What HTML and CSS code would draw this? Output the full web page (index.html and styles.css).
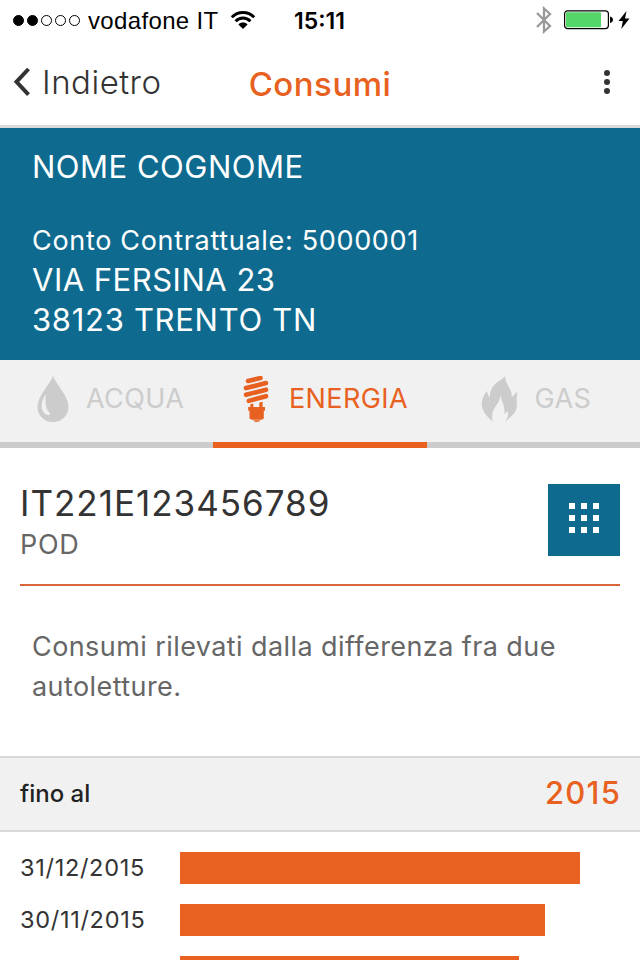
FILE: index.html
```html
<!DOCTYPE html>
<html lang="it">
<head>
    <meta charset="UTF-8">
    <meta name="viewport" content="width=device-width, initial-scale=1.0">
    <title>Consumi</title>
    <link rel="stylesheet" href="styles.css">
</head>
<body>
    <div class="status-bar">
        <div class="signal">
            <span class="dot full"></span>
            <span class="dot full"></span>
            <span class="dot"></span>
            <span class="dot"></span>
            <span class="dot"></span>
        </div>
        <span class="carrier">vodafone IT</span>
        <svg class="wifi" width="26" height="20" viewBox="0 0 26 20">
            <path d="M1.8 7.2C8 .9 18 .9 24.2 7.2M5.6 11.2c4.2-4.2 10.6-4.2 14.8 0" fill="none" stroke="#000" stroke-width="3"/>
            <path d="M13 19l-4.600-4.600c2.600-2.400 6.600-2.400 9.200 0z"/>
        </svg>
        <span class="time">15:11</span>
        <div class="status-right">
            <svg width="16" height="28" viewBox="0 0 16 28">
                <path d="M1 7l13 13-6 5.5V2.5l6 5.500L1 21" fill="none" stroke="#999" stroke-width="2.300"/>
            </svg>
            <svg class="battery" width="50" height="20" viewBox="0 0 50 20">
                <rect x=".6" y=".8" width="43.800" height="17.800" rx="3" fill="#fff" stroke="#000" stroke-width="1.200"/>
                <rect x="2" y="2.200" width="35" height="15" rx="1" fill="#53d769"/>
                <path d="M46 6.500c4 .5 4 6 0 6.500z"/>
            </svg>
            <svg width="12" height="20" viewBox="0 0 12 20">
                <path d="M8.500 1L.5 11h4.300L3.300 19 11.500 8.500H7z"/>
            </svg>
        </div>
    </div>

    <div class="navbar">
        <a class="back">
            <svg width="18" height="30" viewBox="0 0 18 30">
                <path d="M15.500 2L3.500 14.800l12 12.800" fill="none" stroke="#333" stroke-width="4"/>
            </svg>
            <span>Indietro</span>
        </a>
        <h1>Consumi</h1>
        <div class="menu">
            <span></span>
            <span></span>
            <span></span>
        </div>
    </div>

    <div class="account">
        <p class="name">NOME COGNOME</p>
        <p class="contract">Conto Contrattuale: 5000001</p>
        <p class="street">VIA FERSINA 23</p>
        <p class="city">38123 TRENTO TN</p>
    </div>

    <div class="tabs">
        <div class="tab">
            <svg width="36" height="46" viewBox="0 0 36 46">
                <path fill="#ccc" d="M18 0c3 8.500 15.500 19.500 15.500 31a15.500 15.200 0 0 1-31 0C2.500 19.500 15 8.500 18 0z"/>
                <path fill="#f1f1f1" d="M10.900 18.300C5.500 26 4.500 36 13 39.200c1.400.3 2.300-.8 1.600-2.400C11 33.500 9.800 27 10.900 18.300z"/>
            </svg>
            <span>ACQUA</span>
        </div>
        <div class="tab active">
            <svg width="36" height="46" viewBox="0 0 36 46">
                <path d="M10 4.900l12.500-2.900M8 12.100l20-5.100M8 18.800l20-5.100M10.800 24.900l17.200-4.700" fill="none" stroke="#e86120" stroke-width="4.600" stroke-linecap="round"/>
                <path fill="#e86120" d="M12.300 28.300l3-.8V31h6v-4.500l3.300-.8V31h2.400v3.700h-1.200v7.800l-2.300 1.200H13.800l-2.300-1.200v-7.800h-1.300V31h2.100zM15.300 44.300h7c-.6 2.200-6.400 2.200-7 0z"/>
            </svg>
            <span>ENERGIA</span>
        </div>
        <div class="tab">
            <svg width="38" height="46" viewBox="0 0 38 46">
                <path fill="#ccc" d="M24.500 0C23 7 31 12 30.800 20.700c2-1 4-3 5.700-6-1 7-.8 9-.6 14C35.800 36 31 40 24 45.700c3.500-5 3.500-8 2.300-11.500-.4 1.500-1.500 3-3.100 3.500C24.500 30 20.500 26 19.500 19c-.3 10-11.500 13.500-7.700 26.700C7 41 1.500 37 .8 29c-.4-5 2-10.500 5.300-14 .1 2 .8 4.500 2.700 6.500C8.500 8 20 5 24.500 0z"/>
            </svg>
            <span>GAS</span>
        </div>
    </div>

    <div class="supply">
        <div>
            <div class="code">IT221E123456789</div>
            <div class="code-label">POD</div>
        </div>
        <div class="grid-button">
            <span></span><span></span><span></span>
            <span></span><span></span><span></span>
            <span></span><span></span><span></span>
        </div>
    </div>

    <p class="note">Consumi rilevati dalla differenza fra due autoletture.</p>

    <div class="year-header">
        <span class="until">fino al</span>
        <span class="year">2015</span>
    </div>

    <div class="chart">
        <div class="row">
            <span class="date">31/12/2015</span>
            <div class="bar" style="width: 400px"></div>
        </div>
        <div class="row">
            <span class="date">30/11/2015</span>
            <div class="bar" style="width: 365px"></div>
        </div>
        <div class="row">
            <span class="date"></span>
            <div class="bar" style="width: 339px"></div>
        </div>
    </div>
</body>
</html>
```
FILE: styles.css
```css
* {
    box-sizing: border-box;
}
body {
    margin: 0;
    height: 960px;
    overflow: hidden;
    background: #fff;
    color: #333;
    font-family: Inter, "Liberation Sans", sans-serif;
}
p, h1 {
    margin: 0;
    white-space: nowrap;
}
svg {
    display: block;
    flex: none;
}

/* status bar */
.status-bar {
    display: flex;
    align-items: center;
    height: 40px;
    padding: 0 10px 0 13px;
    color: #000;
    font-family: "Liberation Sans", Arial, sans-serif;
    font-size: 24px;
}
.signal {
    display: flex;
    gap: 3px;
}
.dot {
    width: 11px;
    height: 11px;
    border: 1px solid #000;
    border-radius: 50%;
}
.dot.full {
    background: #000;
}
.carrier {
    width: 130px;
    margin-left: 8px;
    padding-top: 2px;
    letter-spacing: 0.35px;
    white-space: nowrap;
}
.wifi {
    margin-left: 12px;
}
.time {
    margin-left: 38px;
    padding-top: 2px;
    font-family: Inter, sans-serif;
    font-size: 23px;
    font-weight: 600;
}
.status-right {
    display: flex;
    align-items: center;
    margin-left: auto;
}
.battery {
    margin: 0 4px 0 12px;
}

/* navigation */
.navbar {
    display: grid;
    grid-template-columns: 200px 240px 200px;
    align-items: center;
    height: 88px;
    border-bottom: 3px solid #dadada;
}
.back {
    display: flex;
    align-items: center;
    gap: 11px;
    padding: 0 0 2px 13px;
    font-size: 33px;
    font-weight: 300;
    letter-spacing: 0.5px;
}
.navbar h1 {
    padding-top: 2px;
    color: #e86120;
    font-size: 33px;
    font-weight: 500;
    letter-spacing: 0.5px;
    text-align: center;
}
.menu {
    display: flex;
    flex-direction: column;
    gap: 3px;
    justify-self: end;
    margin: 0 30px 1px 0;
}
.menu span {
    width: 6px;
    height: 6px;
    border-radius: 50%;
    background: #333;
}

/* customer */
.account {
    height: 232px;
    padding: 19px 32px 0;
    background: #0e6b8f;
    color: #fff;
    font-size: 31px;
    letter-spacing: 0.5px;
    line-height: 40px;
}
.account .contract {
    margin: 34px 0 -1px;
    font-size: 27px;
    letter-spacing: 0.68px;
}
.account .city {
    letter-spacing: 0.7px;
}

/* tabs */
.tabs {
    display: grid;
    grid-template-columns: repeat(3, 1fr);
    height: 88px;
    background: #f1f1f1;
}
.tab {
    display: flex;
    align-items: center;
    justify-content: center;
    gap: 15px;
    padding: 0 0 4px 6px;
    border-bottom: 6px solid #ccc;
    color: #ccc;
    font-size: 27px;
    letter-spacing: 0.4px;
}
.tab span {
    margin-top: -2px;
}
.tab.active {
    border-color: #e86120;
    color: #e86120;
}

/* supply point */
.supply {
    display: flex;
    justify-content: space-between;
    height: 138px;
    margin: 0 20px;
    padding-top: 36px;
    border-bottom: 2px solid #d9663a;
}
.code {
    margin-top: -1px;
    font-size: 35px;
    letter-spacing: 1px;
    line-height: 40px;
}
.code-label {
    margin-top: 2px;
    color: #666;
    font-size: 27px;
    letter-spacing: 0.7px;
    line-height: 40px;
}
.grid-button {
    display: grid;
    grid-template-columns: repeat(3, 6px);
    grid-auto-rows: 6px;
    gap: 6px;
    width: 72px;
    height: 72px;
    padding: 19px 0 0 21px;
    background: #0e6b8f;
}
.grid-button span {
    background: #fff;
}
.note {
    height: 170px;
    padding: 41px 32px 0;
    color: #666;
    font-size: 27px;
    letter-spacing: 0.42px;
    line-height: 40px;
    white-space: normal;
}

/* readings */
.year-header {
    display: flex;
    align-items: center;
    justify-content: space-between;
    height: 76px;
    padding: 0 19px 2px 20px;
    border: solid #d9d9d9;
    border-width: 2px 0;
    background: #f1f1f1;
}
.until {
    color: #222;
    font-size: 24px;
    font-weight: 500;
}
.year {
    margin-top: -2px;
    color: #e86120;
    font-size: 31px;
    font-weight: 500;
    letter-spacing: 1.2px;
}
.chart {
    display: flex;
    flex-direction: column;
    gap: 20px;
    padding: 20px 20px 0;
}
.row {
    display: flex;
    height: 32px;
}
.date {
    width: 160px;
    font-size: 23.5px;
    letter-spacing: 0.7px;
    line-height: 32px;
}
.bar {
    background: #e86120;
}
```
